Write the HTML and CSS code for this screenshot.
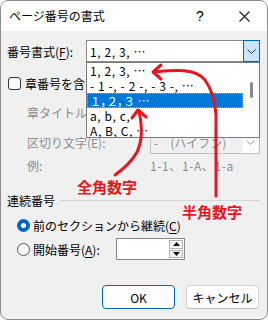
FILE: index.html
```html
<!DOCTYPE html>
<html lang="ja">
<head>
<meta charset="utf-8">
<link rel="stylesheet" href="styles.css">
</head>
<body>
<div class="dialog">
  <div class="titlebar">
    <span class="title">ページ番号の書式</span>
    <span class="help">?</span>
    <span class="close"><svg width="11" height="11" viewBox="0 0 11 11"><path d="M0.5 0.5 L10.5 10.5 M10.5 0.5 L0.5 10.5" stroke="#1a1a1a" stroke-width="1.1" fill="none"/></svg></span>
  </div>
  <div class="content">
    <div class="row r1">
      <span class="lbl w79">番号書式(<u>F</u>):</span>
      <div class="combo focus">
        <span class="val lat">1, 2, 3, …</span>
        <span class="dbtn"><svg width="9" height="5" viewBox="0 0 9 5"><path d="M0.5 0.5 L4.5 4.5 L8.5 0.5" stroke="#333" fill="none"/></svg></span>
        <div class="list">
          <div class="items">
            <div class="item lat">1, 2, 3, …</div>
            <div class="item lat">- 1 -, - 2 -, - 3 -, …</div>
            <div class="item sel">１，２，３ …</div>
            <div class="item lat">a, b, c,</div>
            <div class="item lat">A, B, C, …</div>
          </div>
          <div class="scroll"><div class="thumb"></div></div>
        </div>
      </div>
    </div>
    <div class="row r2">
      <span class="check"></span>
      <span class="ctext">章番号を含める(<u>N</u>)</span>
    </div>
    <div class="row r3 indent dis">
      <span class="lbl w123"><span class="clip c59">章タイトルのスタイル(P):</span></span>
      <div class="combo disabled"><span class="val"></span><span class="dbtn"></span></div>
    </div>
    <div class="row r4 indent dis">
      <span class="lbl w123">区切り文字(E):</span>
      <div class="combo disabled">
        <span class="val">-　(ハイフン)</span>
        <span class="dbtn"><svg width="9" height="5" viewBox="0 0 9 5"><path d="M0.5 0.5 L4.5 4.5 L8.5 0.5" stroke="#9a9a9a" fill="none"/></svg></span>
      </div>
    </div>
    <div class="row r5 indent dis">
      <span class="lbl w123">例:</span>
      <span class="lat">1-1、1-A、1-a</span>
    </div>
    <div class="row r6">
      <span class="sec">連続番号</span>
      <span class="sep"></span>
    </div>
    <div class="row r7 rind">
      <span class="radio on"></span>
      <span class="rtext">前のセクションから継続(<u>C</u>)</span>
    </div>
    <div class="row r8 rind">
      <span class="radio"></span>
      <span class="rtext w83">開始番号(<u>A</u>):</span>
      <div class="spin">
        <span class="sval"></span>
        <span class="sbtns">
          <span class="sb"><svg width="7" height="4" viewBox="0 0 7 4"><path d="M0 4 L3.5 0 L7 4Z" fill="#111"/></svg></span>
          <span class="sb"><svg width="7" height="4" viewBox="0 0 7 4"><path d="M0 0 L3.5 4 L7 0Z" fill="#111"/></svg></span>
        </span>
      </div>
    </div>
    <div class="row buttons">
      <button class="btn def">OK</button>
      <button class="btn">キャンセル</button>
    </div>
  </div>
  <svg class="annot" width="268" height="320" viewBox="0 0 268 320">
    <g stroke="#e8151f" stroke-width="3" fill="none" stroke-linecap="round" stroke-linejoin="round">
      <path d="M154,72 C175,70 195,68 205,80 C212,90 215,100 216,115 L216,196"/>
      <path d="M161,65 L153,72 L161,79"/>
      <path d="M139,111 C142,125 143,140 137,152 C131,163 122,170 115,175"/>
      <path d="M132,118 L138,110 L146,117"/>
    </g>
  </svg>
  <span class="note n1">全角数字</span>
  <span class="note n2">半角数字</span>
</div>
</body>
</html>
```
FILE: styles.css
```css
* { box-sizing: border-box; }
html, body { margin: 0; padding: 0; background: #ffffff; }
body {
  font-family: "Noto Sans CJK JP", "Noto Sans", sans-serif;
  font-size: 12px;
  color: #000;
}
u { text-decoration: underline; text-underline-offset: 2px; }
.lat { letter-spacing: 0.6px; }

.dialog {
  position: relative;
  width: 268px;
  height: 320px;
  border: 1px solid #8c8c8c;
  border-radius: 8px;
  background: #f0f0f0;
  overflow: hidden;
  display: flex;
  flex-direction: column;
}

.titlebar {
  flex: none;
  height: 30px;
  background: #ffffff;
  display: flex;
  align-items: center;
  padding-left: 8px;
}
.title { flex: 1; font-size: 12px; line-height: 1; }
.help {
  width: 46px;
  text-align: center;
  font-family: "Liberation Sans", sans-serif;
  font-size: 14px;
}
.close {
  width: 44px;
  display: flex;
  justify-content: center;
  padding-right: 1px;
}
.close svg { display: block; }

.content {
  flex: 1;
  padding: 9px 7px 0 6px;
  display: flex;
  flex-direction: column;
}

.row { display: flex; align-items: center; flex: none; }
.r1 { height: 22px; }
.r2 { margin-top: 11px; height: 20px; padding-left: 1px; }
.r3 { margin-top: 9px; height: 20px; }
.r4 { margin-top: 9px; height: 23px; }
.r5 { margin-top: 1px; height: 20px; }
.r6 { margin-top: 15px; height: 20px; }
.r7 { margin-top: 5px; height: 20px; }
.r8 { margin-top: 3px; height: 22px; }
.buttons { margin-top: 25px; height: 24px; justify-content: flex-end; gap: 11px; padding-right: 1px; }

.indent { padding-left: 20px; }
.rind { padding-left: 10px; }
.dis { color: #8d8d8d; }

.lbl { flex: none; white-space: nowrap; }
.w79 { width: 79px; }
.w123 { width: 123px; }
.w83 { width: 83px; }
.clip { display: inline-block; overflow: hidden; white-space: nowrap; vertical-align: top; }
.c59 { width: 59px; }

.combo {
  position: relative;
  display: flex;
  align-items: center;
  background: #fff;
  border: 1px solid #8a8a8a;
  height: 100%;
}
.r1 .combo { width: 174px; }
.r3 .combo, .r4 .combo { width: 110px; }
.combo .val { flex: 1; padding-left: 3px; white-space: nowrap; overflow: hidden; }
.dbtn {
  flex: none;
  align-self: stretch;
  width: 17px;
  margin: -1px -1px -1px 0;
  display: flex;
  align-items: center;
  justify-content: center;
}
.focus .dbtn { background: #cce4f7; border: 1px solid #0067c0; }
.dbtn svg { display: block; }
.combo.disabled { background: #f0f0f0; border-color: #c2c2c2; }
.combo.disabled .dbtn { background: #ffffff; margin: 0 1px 0 0; width: 15px; }

.list {
  position: absolute;
  top: 21px;
  left: -1px;
  width: 174px;
  height: 76px;
  background: #fff;
  border: 1px solid #7a7a7a;
  display: flex;
  z-index: 5;
  overflow: hidden;
}
.items { flex: 1; display: flex; flex-direction: column; }
.item {
  flex: none;
  height: 15px;
  line-height: 15px;
  padding-left: 3px;
  white-space: nowrap;
  color: #000;
}
.item.sel {
  background: #0078d7;
  color: #fff;
  border: 1px dotted #ff9c3a;
  padding-left: 3px;
  line-height: 13px;
  font-feature-settings: "palt";
  letter-spacing: 0.8px;
}
.scroll { width: 16px; flex: none; position: relative; }
.thumb {
  margin: 19px 0 0 7px;
  width: 3px;
  height: 16px;
  background: #8a8a8a;
  border-radius: 2px;
}

.check {
  flex: none;
  width: 13px;
  height: 13px;
  border: 1px solid #333;
  border-radius: 3px;
  background: #fbfbfb;
}
.ctext {
  margin-left: 4px;
  white-space: nowrap;
  width: 61px;
  overflow: hidden;
  flex: none;
}

.sec { flex: none; }
.sep { flex: 1; height: 1px; background: #d6d6d6; margin-left: 5px; }

.radio {
  flex: none;
  width: 13px;
  height: 13px;
  border-radius: 50%;
  border: 1px solid #555;
  background: #f7f7f7;
}
.radio.on {
  border: 4px solid #0067c0;
  background: #fff;
}
.rtext { margin-left: 3px; white-space: nowrap; }

.spin {
  width: 69px;
  height: 22px;
  background: #fff;
  border: 1px solid #8a8a8a;
  display: flex;
  padding: 1px 1px 1px 0;
}
.sval { flex: 1; }
.sbtns { width: 14px; display: flex; flex-direction: column; gap: 1px; }
.sb {
  flex: 1;
  border: 1px solid #b4b4b4;
  background: #f3f3f3;
  display: flex;
  align-items: center;
  justify-content: center;
}
.sb svg { display: block; }

.btn {
  width: 73px;
  height: 24px;
  background: #fdfdfd;
  border: 1px solid #d0d0d0;
  border-bottom-color: #bdbdbd;
  border-radius: 4px;
  font-family: "Noto Sans CJK JP", "Noto Sans", sans-serif;
  font-size: 12px;
  color: #000;
  padding: 0;
}
.btn.def { border: 1px solid #0067c0; }

.annot { position: absolute; top: -1px; left: -1px; z-index: 10; pointer-events: none; }
.note {
  position: absolute;
  z-index: 11;
  color: #e8151f;
  font-weight: bold;
  font-size: 15px;
  line-height: 15px;
  white-space: nowrap;
}
.n1 { left: 76px; top: 178px; }
.n2 { left: 181px; top: 203px; }
```
